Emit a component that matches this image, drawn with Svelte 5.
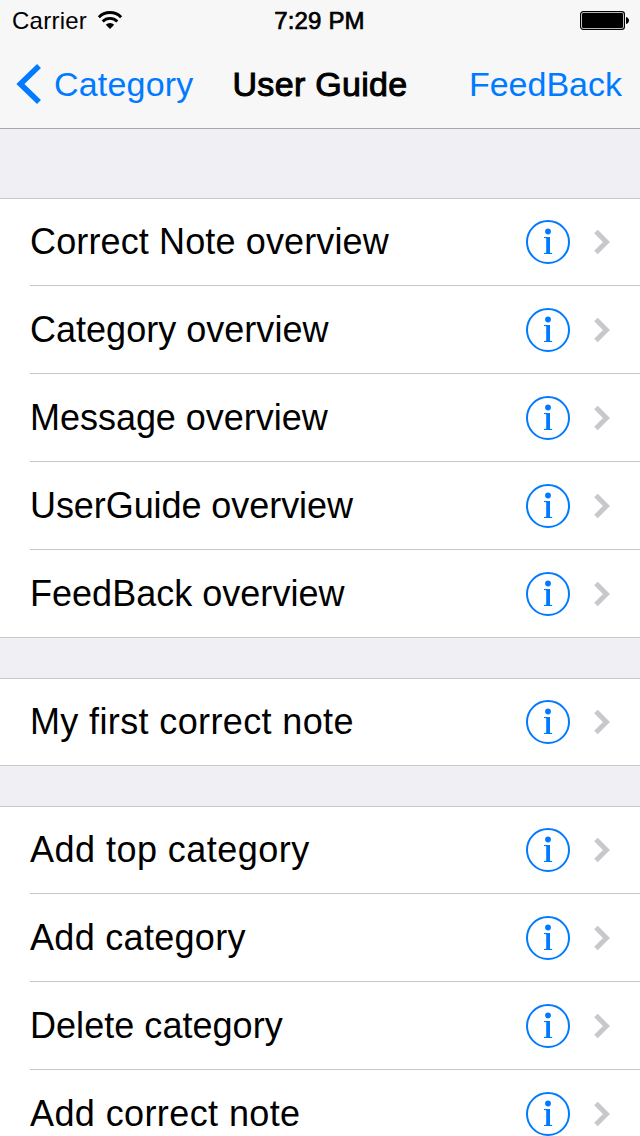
<script lang="ts">
    type Row = { title: string; spacing: number };

    // spacing is the letter-spacing in px for that title
    const groups: Row[][] = [
        [
            { title: 'Correct Note overview', spacing: 0.13 },
            { title: 'Category overview', spacing: 0.02 },
            { title: 'Message overview', spacing: -0.03 },
            { title: 'UserGuide overview', spacing: -0.07 },
            { title: 'FeedBack overview', spacing: 0.02 },
        ],
        [{ title: 'My first correct note', spacing: 0.37 }],
        [
            { title: 'Add top category', spacing: 0.47 },
            { title: 'Add category', spacing: 0.3 },
            { title: 'Delete category', spacing: 0.04 },
            { title: 'Add correct note', spacing: 0.4 },
        ],
    ];
</script>

<div class="screen">
    <header>
        <div class="status-bar">
            <div class="carrier">
                <span>Carrier</span>
                <svg class="wifi" width="26" height="20" viewBox="0 0 26 20">
                    <path d="M1.9 7.2a15.7 15.7 0 0 1 22.2 0" fill="none" stroke="#000" stroke-width="3" />
                    <path d="M5.7 11.4a10.3 10.3 0 0 1 14.6 0" fill="none" stroke="#000" stroke-width="2.8" />
                    <path d="M8.8 14.8a5.9 5.9 0 0 1 8.4 0L13 19z" />
                </svg>
            </div>
            <div class="time">7:29 PM</div>
            <div class="battery">
                <svg width="50" height="20" viewBox="0 0 50 20">
                    <rect x="0.6" y="0.6" width="43.8" height="17.8" rx="2.6" fill="none" stroke="#000" stroke-width="1.2" />
                    <rect x="2" y="2" width="41" height="15" rx="1.2" />
                    <path d="M46 6c4 1 4 6 0 7z" />
                </svg>
            </div>
        </div>
        <nav>
            <button class="back">
                <svg width="28" height="42" viewBox="0 0 28 42">
                    <path d="M23 3 4.4 21 23 39" fill="none" stroke="#007aff" stroke-width="5.6" />
                </svg>
                <span>Category</span>
            </button>
            <h1>User Guide</h1>
            <button class="feedback">FeedBack</button>
        </nav>
    </header>

    <main>
        {#each groups as rows}
            <ul>
                {#each rows as row}
                    <li>
                        <span class="title" style="letter-spacing: {row.spacing}px">{row.title}</span>
                        <svg class="info" width="44" height="44" viewBox="0 0 44 44" fill="#007aff">
                            <circle cx="22" cy="22" r="21" fill="none" stroke="#007aff" stroke-width="2" />
                            <circle cx="22" cy="11.5" r="2.9" />
                            <path d="M18 17h6v15.7l2.2.3v1H18v-1l2.2-.3V18.3L18 18z" />
                        </svg>
                        <svg class="chevron" width="18" height="28" viewBox="0 0 18 28">
                            <path d="M3 3.6 13.4 14 3 24.4" fill="none" stroke="#c7c7cc" stroke-width="5" />
                        </svg>
                    </li>
                {/each}
            </ul>
        {/each}
    </main>
</div>

<style>
    :global(body) { margin: 0; overflow: hidden; }
    .screen { width: 640px; height: 1136px; overflow: hidden; background: #efeff4; color: #000; font-family: "Liberation Sans", Arial, sans-serif; }

    header { box-sizing: border-box; height: 129px; background: #f7f7f7; border-bottom: 1px solid #a7a7aa; }
    .status-bar { display: grid; grid-template-columns: 1fr auto 1fr; align-items: center; height: 42px; padding: 0 10px 0 12px; font-size: 24px; line-height: 42px; }
    .carrier { display: flex; align-items: center; gap: 10px; letter-spacing: 0.25px; }
    .wifi { display: block; margin-bottom: 2px; }
    .time { margin-right: 3px; letter-spacing: 0.15px; -webkit-text-stroke: 0.7px #000; }
    .battery { display: flex; justify-content: flex-end; }

    nav { display: grid; grid-template-columns: 1fr auto 1fr; align-items: center; height: 84px; padding: 0 18px 0 16px; font-size: 34px; }
    button { padding: 0; border: none; background: none; color: #007aff; font: inherit; line-height: 40px; cursor: pointer; }
    .back { display: flex; align-items: center; justify-self: start; gap: 10px; letter-spacing: 0.2px; }
    .feedback { justify-self: end; }
    h1 { margin: 0 0 0 2px; font-size: 34px; font-weight: normal; line-height: 40px; letter-spacing: 0.3px; -webkit-text-stroke: 1px #000; }

    main { display: flex; flex-direction: column; gap: 40px; padding-top: 69px; }
    ul { margin: 0; padding: 0; list-style: none; background: #fff; box-shadow: inset 0 1px #c8c7cc, inset 0 -1px #c8c7cc; }
    li { box-sizing: border-box; display: flex; align-items: center; height: 88px; margin-left: 30px; padding: 1px 29px 0 0; border-bottom: 1px solid #c8c7cc; }
    .title { flex: 1; font-size: 36px; line-height: 44px; white-space: nowrap; }
    .info { margin-right: 23px; }
</style>
